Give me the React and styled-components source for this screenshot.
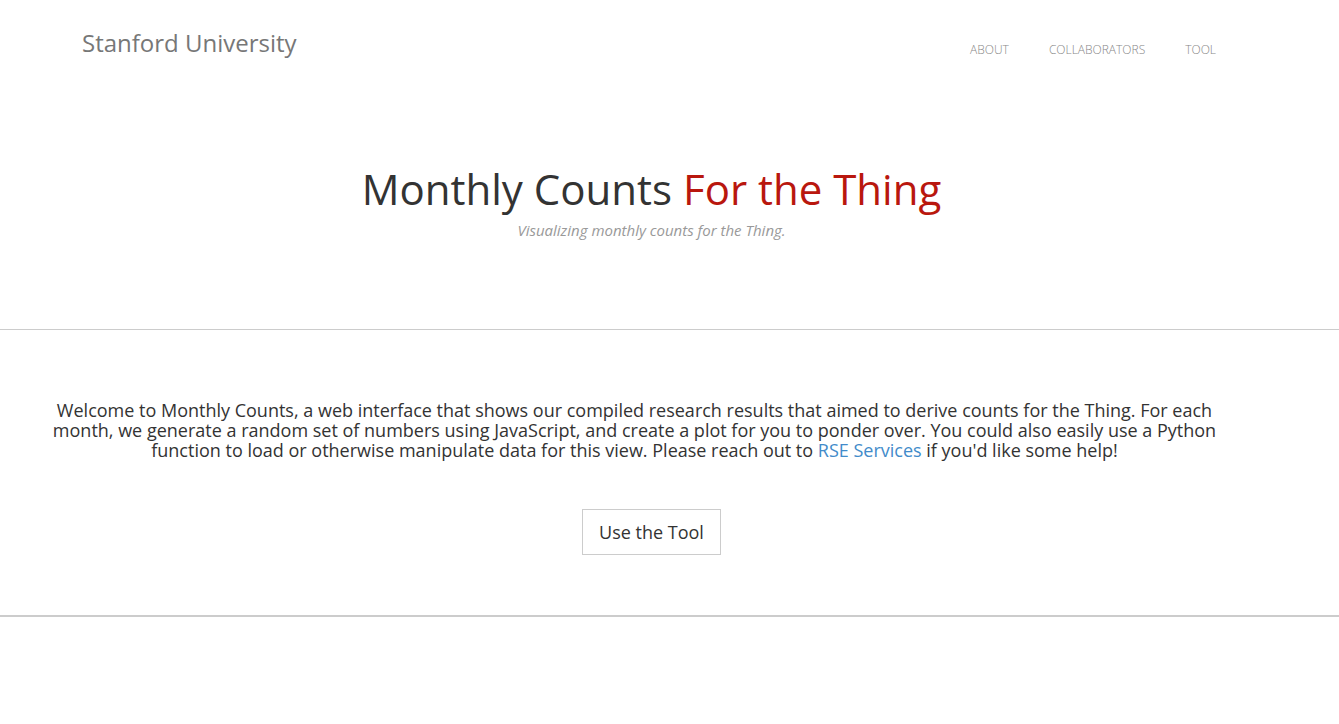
import styled, { createGlobalStyle } from 'styled-components';

const GlobalStyle = createGlobalStyle`
    html, body {
        margin: 0;
        padding: 0;
        background: #fff;
        font-family: "Open Sans", "Liberation Sans", sans-serif;
        color: #333;
    }
`;

const navItems = ['About', 'Collaborators', 'Tool'];

const App = () => {
    return (
        <>
            <GlobalStyle />
            <Header>
                <Brand>Stanford University</Brand>
                <Nav>
                    {navItems.map(item => (
                        <NavLink key={item} href="#">{item}</NavLink>
                    ))}
                </Nav>
            </Header>
            <Hero>
                <Title>Monthly Counts <Accent>For the Thing</Accent></Title>
                <Subtitle>Visualizing monthly counts for the Thing.</Subtitle>
            </Hero>
            <Rule />
            <Intro>
                <Text>
                    Welcome to Monthly Counts, a web interface that shows our compiled research results that aimed to derive counts for the Thing. For each month, we generate a random set of numbers using JavaScript, and create a plot for you to ponder over. You could also easily use a Python function to load or otherwise manipulate data for this view. Please reach out to <Link href="#">RSE Services</Link> if you'd like some help!
                </Text>
                <Button>Use the Tool</Button>
            </Intro>
            <Rule thick />
        </>
    );
};

export default App;

const Header = styled.header`
    display: flex;
    justify-content: space-between;
    align-items: flex-start;
    padding: 26px 123px 0 82px;
    height: 100px;
    box-sizing: border-box;
`;

const Brand = styled.a`
    font-size: 24px;
    color: #777;
    text-decoration: none;
`;

const Nav = styled.nav`
    display: flex;
    gap: 40px;
    margin-top: 15px;
`;

const NavLink = styled.a`
    font-size: 12px;
    font-weight: 300;
    text-transform: uppercase;
    color: #888;
    text-decoration: none;
`;

const Hero = styled.section`
    display: flex;
    flex-direction: column;
    align-items: center;
    padding: 64px 36px 89px 0;
`;

const Title = styled.h1`
    margin: 0;
    font-size: 42px;
    font-weight: 400;
    color: #333;
    line-height: 1.2;
`;

const Accent = styled.span`
    color: #b9170e;
`;

const Subtitle = styled.p`
    margin: 6px 0 0;
    font-size: 15px;
    font-style: italic;
    color: #999;
`;

const Rule = styled.hr`
    margin: 0;
    border: none;
    border-top: ${props => props.thick ? '2px' : '1px'} solid #ccc;
`;

const Intro = styled.section`
    display: flex;
    flex-direction: column;
    align-items: center;
    padding: 70px 0 60px;
`;

const Text = styled.p`
    margin: 0 110px 49px 40px;
    font-size: 18px;
    line-height: 20px;
    text-align: center;
    color: #333;
`;

const Link = styled.a`
    color: #428bca;
    text-decoration: none;
`;

const Button = styled.button`
    margin-right: 36px;
    padding: 0 16px;
    height: 46px;
    background: #fff;
    border: 1px solid #ccc;
    font-family: inherit;
    font-size: 18px;
    color: #333;
    cursor: pointer;
`;
